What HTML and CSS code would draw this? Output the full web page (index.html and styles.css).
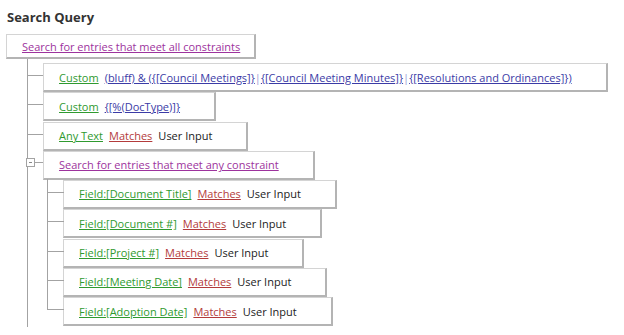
FILE: index.html
```html
<!DOCTYPE html>
<html>
<head>
    <meta charset="UTF-8">
    <title>Search Query</title>
    <link rel="stylesheet" href="styles.css">
</head>
<body>
<div class="query">
    <h3 class="title">Search Query</h3>
    <div class="box root"><a class="purple">Search for entries that meet all constraints</a></div>
    <div class="branch outer">
        <div class="item">
            <div class="box"><a class="green">Custom</a><span class="expr"><a class="blue">(bluff) &amp; ({[Council Meetings]}</a><span class="pipe">|</span><a class="blue">{[Council Meeting Minutes]}</a><span class="pipe">|</span><a class="blue">{[Resolutions and Ordinances]})</a></span></div>
        </div>
        <div class="item">
            <div class="box"><a class="green">Custom</a><a class="blue">{[%(DocType)]}</a></div>
        </div>
        <div class="item">
            <div class="box"><a class="green">Any Text</a><a class="red">Matches</a><span>User Input</span></div>
        </div>
        <div class="item group">
            <span class="toggle"></span>
            <div class="box"><a class="purple">Search for entries that meet any constraint</a></div>
            <div class="branch inner">
                <div class="item">
                    <div class="box"><a class="green">Field:[Document Title]</a><a class="red">Matches</a><span>User Input</span></div>
                </div>
                <div class="item">
                    <div class="box"><a class="green">Field:[Document #]</a><a class="red">Matches</a><span>User Input</span></div>
                </div>
                <div class="item">
                    <div class="box"><a class="green">Field:[Project #]</a><a class="red">Matches</a><span>User Input</span></div>
                </div>
                <div class="item">
                    <div class="box"><a class="green">Field:[Meeting Date]</a><a class="red">Matches</a><span>User Input</span></div>
                </div>
                <div class="item">
                    <div class="box"><a class="green">Field:[Adoption Date]</a><a class="red">Matches</a><span>User Input</span></div>
                </div>
            </div>
        </div>
    </div>
</div>
</body>
</html>
```

FILE: styles.css
```css
*{
    margin: 0;
    padding: 0;
    box-sizing: border-box;
}
body{
    font-family: "Open Sans", "Liberation Sans", sans-serif;
    font-size: 11px;
    color: #222;
    background: #fff;
}
.query{
    padding: 8px 0 0 6px;
}
.title{
    font-size: 13px;
    font-weight: bold;
    color: #333;
    line-height: 18px;
    height: 26px;
    margin-left: 1px;
}
a{
    text-decoration: underline;
    cursor: pointer;
}
.green{ color: #2f9a2f; }
.red{ color: #b33b3b; }
.purple{ color: #9d339d; }
.blue{ color: #3b3ba6; }
.pipe{
    color: #9a9ad6;
}

/* 每一行条件的方框 */
.box{
    display: flex;
    align-items: center;
    gap: 6px;
    height: 29px;
    padding: 0 34px 0 15px;
    border: 1px solid #d4d4d4;
    border-right: 2px solid #b4b4b4;
    border-bottom: 2px solid #b4b4b4;
    background: #fff;
    white-space: nowrap;
}
.box.root{
    height: 25px;
    padding-right: 14px;
}
.branch{
    display: flex;
    flex-direction: column;
    align-items: flex-start;
}
.item{
    position: relative;
    display: flex;
    flex-direction: column;
    align-items: flex-start;
    margin-bottom: 0.33px;
}
.query > .box{
    align-self: flex-start;
    display: inline-flex;
}

/* 树的连线 */
.outer{
    margin-left: 21px;
    padding: 4px 0 0 15px;
    border-left: 1px solid #a3a3a3;
}
.outer > .item::before{
    content: "";
    position: absolute;
    left: -16px;
    top: 12px;
    width: 16px;
    border-top: 1px solid #a3a3a3;
}
.outer > .group::before{
    left: -8px;
    top: 11px;
    width: 8px;
}
.toggle{
    position: absolute;
    left: -17px;
    top: 7px;
    width: 9px;
    height: 9px;
    border: 1px solid #a3a3a3;
    background: #fff;
}
.toggle::after{
    content: "";
    position: absolute;
    left: 2px;
    top: 3px;
    width: 3px;
    border-top: 1px solid #888;
}
.inner{
    margin-left: 4px;
    padding-left: 16px;
}
.inner > .item::before{
    content: "";
    position: absolute;
    left: -16px;
    top: -1px;
    width: 16px;
    height: 13px;
    border-left: 1px solid #a3a3a3;
    border-bottom: 1px solid #a3a3a3;
}
.inner > .item:not(:last-child)::after{
    content: "";
    position: absolute;
    left: -16px;
    top: 0;
    bottom: -1px;
    border-left: 1px solid #a3a3a3;
}
```
